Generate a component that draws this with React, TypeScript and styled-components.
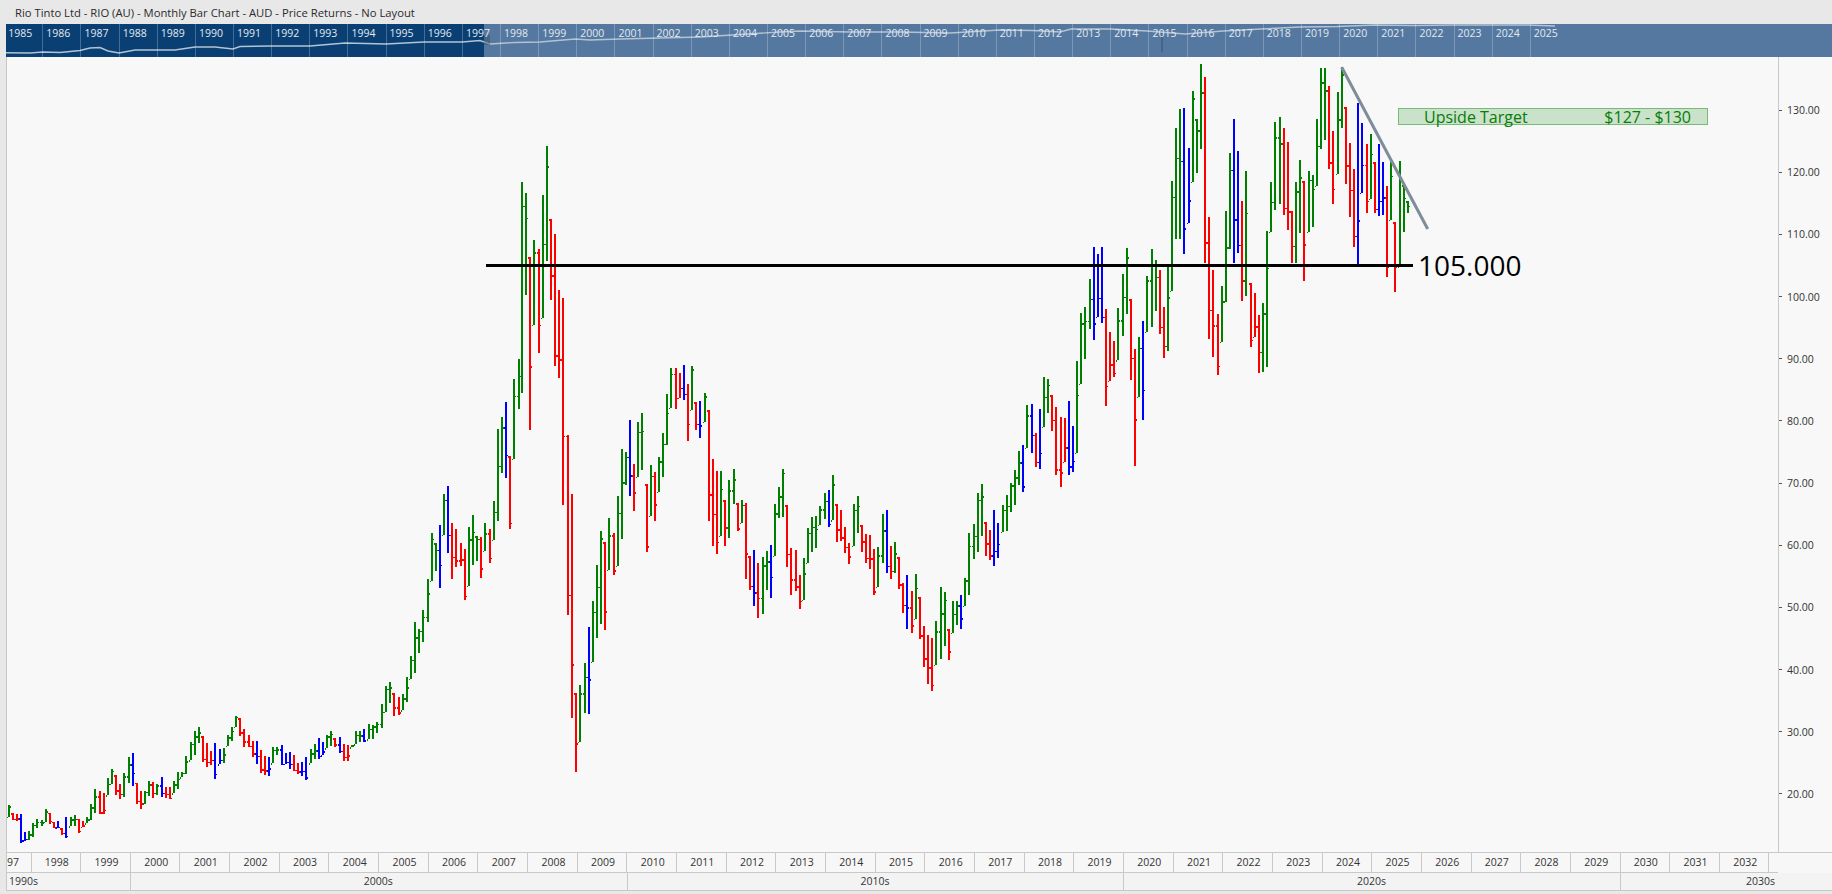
import styled, { createGlobalStyle } from "styled-components";

const GlobalStyle = createGlobalStyle`
  html, body {
    margin: 0;
    padding: 0;
    background: #e8e8e8;
  }
`;

// each run is read off the chart: top is the page y the values count from (3 units = 1px),
// x is the page x of the first bar, values are colour + high,low
const runs = [
  {
    top: 660,
    x: 8.5,
    bars: "g436,470 r460,480 r462,482 b463,550 b516,542 g512,540 g488,532 g478,505 g480,497 g448,485 r458,492 r485,503 b484,505 r505,526 b472,535 g472,498 g464,498 r476,518 r482,500 g470,490 g433,480 g388,458 r394,463 r400,463 g355,405 g328,372 r346,405 r372,418 g338,412 g292,370 b280,378 r368,433 r394,446 g392,432 g364,408 r367,415 g372,405 b352,412 r382,413 r382,418 g362,400 g335,388 g335,352 g287,342 g247,300 g214,285 g202,248 r229,305 r250,322 r272,316 b250,356 b267,312 g265,310 g226,257 g200,242 g167,200 r175,227 r208,262 r225,262 r243,292 b243,312 r271,338 r288,346 b292,347 g260,310 g260,285 b256,316 b278,312 b276,328 r286,334 r310,342 b307,347 b292,361 g268,310 g252,298 b235,298 b247,285 g225,264 g212,258 r234,262 b232,278 r252,303 r256,303 g254,262 g213,252 g212,247 b208,247 g193,238 g196,237 g185,218",
  },
  {
    top: 320,
    x: 382,
    bars: "g1152,1223 g1098,1175 g1087,1148 r1120,1187 r1132,1185 g1122,1170 g1072,1145 g1008,1076 g906,1058 g926,998 g870,965 g778,905 g640,782 g670,752 b615,803 g522,644 b498,698 r610,776 r628,740 r670,738 r688,839 g622,797 g586,734 g648,722 r652,773 g610,692 r628,728 g544,659 g328,602 g292,458 b246,473 r409,626 g178,416 g118,266",
  },
  {
    top: 120,
    x: 522,
    bars: "g186,818 g220,524 r411,929 g360,614 r387,698 g225,593 g78,423 r297,540 r343,738 r510,773 r534,1154",
  },
  {
    top: 350,
    x: 568,
    bars: "r255,795 r432,1103 r1030,1266 g1005,1175 g940,1088 b831,1091 g753,935 g645,863 g543,822 r576,839 g504,659 r549,674 g438,647 g297,568 g307,404 b210,437 r342,482 g216,380 g190,361 r403,605 g346,497 r366,512 g322,425 g250,380 g133,284 g54,173 r54,176 r69,143 b45,149 r102,272 g48,179 r156,239 b153,263 g129,215 r180,512 r327,587 r363,611 g363,557 r450,587 g390,563 g357,461 r460,542 g450,518 r460,686 r618,719 b600,767 r640,803 g621,791 g603,719 b585,743 g462,617 g411,503 g357,500 r465,650 r594,734 r600,722 r675,776 g624,749 g534,638 g501,607 g498,593 g468,524 g429,506 b420,530 g375,510 r462,575 r480,572 r531,608 r579,641 g462,587 g438,548 r525,605 r552,638 r555,656 r597,734 g591,710 g492,638 b480,668 r588,686",
  },
  {
    top: 250,
    x: 895,
    bars: "g876,968 r922,1016 r1000,1088 b975,1136 r1023,1148 g972,1106 r1041,1166 r1128,1250 r1155,1301 r1164,1322 g1113,1244 g1011,1226 g1026,1187 r1137,1229 g1053,1148 g1053,1124 b1035,1136 g984,1067 g849,1034 g822,926 g729,905 g702,857 r816,917 r840,929 b780,947 b819,923 g765,845 g735,842 g699,785 g660,764 g603,704 b585,725 g465,593 b462,608 r549,650 b477,656 g381,530 g387,488 r435,542 r471,674 r501,710 r504,635 b453,674 b528,665 g333,608 g189,401 g171,326 g87,236 b-9,269 b12,200 b-9,218 r178,467 r246,392 r274,380 g174,330 g72,257 g-6,191 r148,389 r297,647 g262,440 b213,509 g78,245 g-3,230 g30,182 r60,251 r171,323 g50,302",
  },
  {
    top: 50,
    x: 1172,
    bars: "g393,722 g234,566 g177,566 b174,611 b294,518 g123,395 g207,368 g42,297 r81,640 r501,866 r660,922 r792,974 g708,875 g483,755 g309,596 b207,638 b303,608 r453,752 g363,737 r700,890 r730,860 r795,968 g760,965 g543,950 g396,545 g216,480 g201,462 r234,494 r276,539 r483,640 g396,638 g330,548 r393,692 g363,545 g375,530 g208,407 g55,296 g55,270 r108,356 r243,461 g126,371 g52,233 r171,401 r279,500 r357,590 b159,642 b219,428 r282,488 g252,446 r336,488 b282,497 b336,494 r408,680 g336,509 r517,725 g334,652 g405,545 g453,488",
  },
];

const barColors: Record<string, string> = {
  g: "#008000",
  r: "#ff0000",
  b: "#0000ff",
};

const monthWidth = 49.66 / 12;

const bars = runs.flatMap((run) =>
  run.bars.split(" ").map((item, i) => {
    const [high, low] = item.slice(1).split(",").map(Number);
    return {
      color: barColors[item[0]],
      kind: item[0],
      x: Math.round(run.x + i * monthWidth - 1),
      high: run.top + high / 3,
      low: run.top + low / 3,
    };
  }),
);

let lastClose = bars[0].low;
const ohlc = bars.map((bar, i) => {
  const span = bar.low - bar.high;
  const wobble = (((i * 37) % 11) / 11) * 0.35;
  const close =
    bar.kind === "g" ? bar.high + span * (0.08 + wobble) : bar.low - span * (0.08 + wobble);
  const open = Math.min(Math.max(lastClose, bar.high), bar.low);
  lastClose = close;
  return { ...bar, open, close };
});

const stripYears = Array.from({ length: 41 }, (_, i) => 1985 + i);
const axisYears = Array.from({ length: 35 }, (_, i) => 1998 + i);
const prices = [130, 120, 110, 100, 90, 80, 70, 60, 50, 40, 30, 20];

const overviewLine =
  "0,28.7 24,29 37,28 54,28.5 74,26.5 84,24 94,23.5 102,27 113,29 129,26 151,26 169,26 189,23 209,23 227,25 234,22.5 265,22 304,22 339,19 380,20 418,18 456,18 474,16.5 484,20 509,18.5 534,18 569,15 584,16 614,15 694,13 734,10.5 774,8 794,7 844,8 894,8 944,9 994,6 1027,6.5 1054,8 1065,5 1104,5 1141,7 1179,10 1217,7 1255,5 1294,3 1331,2.5 1369,1 1408,1.5 1446,1 1484,1 1522,1 1549,2";

const Page = styled.div`
  width: 1832px;
  height: 894px;
  overflow: hidden;
  background: #e8e8e8;
  font-family: "Open Sans", "Noto Sans", sans-serif;
  color: #333333;
`;

const TitleBar = styled.div`
  height: 24px;
  padding-left: 15px;
  display: flex;
  align-items: center;
  font-size: 11.25px;
  color: #2b2b2b;
`;

const Strip = styled.div`
  position: relative;
  height: 33px;
  margin-left: 6px;
  display: flex;
  overflow: hidden;
  background: linear-gradient(to right, #0a3f73 478px, #54789f 478px);
`;

const StripYear = styled.div<{ $last?: boolean }>`
  position: relative;
  flex: 0 0 38.15px;
  box-sizing: border-box;
  padding: 2px 0 0 3px;
  font-size: 10.5px;
  line-height: 14px;
  color: #e3e9f0;
  border-right: ${(p) => (p.$last ? "none" : "1px solid rgba(255, 255, 255, 0.24)")};

  &:first-of-type {
    margin-left: -0.8px;
  }
`;

const OverviewDrawing = styled.svg`
  position: absolute;
  left: 0;
  top: 0;
`;

const Main = styled.div`
  margin-left: 6px;
  border-left: 1px solid #c8c8c8;
  display: flex;
  flex-direction: column;
`;

const ChartRow = styled.div`
  height: 795px;
  display: flex;
  background: #f8f8f8;
`;

const Plot = styled.div`
  position: relative;
  flex: 0 0 1771px;
  overflow: hidden;
`;

const PriceAxis = styled.div`
  flex: 1;
  box-sizing: border-box;
  padding-top: 22px;
  border-left: 1px solid #c8c8c8;
  display: flex;
  flex-direction: column;
`;

const PriceRow = styled.div`
  height: 62.18px;
  display: flex;
  align-items: center;
  gap: 5px;
  font-size: 10.5px;

  &::before {
    content: "";
    width: 3px;
    height: 1px;
    background: #555555;
  }
`;

const TargetBox = styled.div`
  position: absolute;
  left: 1391px;
  top: 51px;
  width: 310px;
  height: 17px;
  box-sizing: border-box;
  padding: 0 16px 0 25px;
  display: flex;
  align-items: center;
  justify-content: space-between;
  background: #c9e2c9;
  border: 1px solid #78bb78;
  font-size: 16px;
  color: #067d06;
`;

const LevelLabel = styled.div`
  position: absolute;
  left: 1411px;
  top: 189px;
  font-size: 28px;
  line-height: 38px;
  color: #000000;
`;

const YearRow = styled.div`
  height: 20px;
  display: flex;
  overflow: hidden;
  background: #f7f7f7;
  border-top: 1px solid #c8c8c8;
`;

const YearInner = styled.div`
  flex: 0 0 1771px;
  display: flex;
  box-sizing: border-box;
  border-bottom: 1px solid #c8c8c8;
`;

const YearCell = styled.div`
  flex: 0 0 49.66px;
  box-sizing: border-box;
  padding-left: 2px;
  border-right: 1px solid #c8c8c8;
  font-size: 10.5px;
  line-height: 19px;
  text-align: center;
`;

const PartYearCell = styled(YearCell)`
  flex-basis: 24.5px;
  padding-left: 0;
  text-align: left;
`;

const DecadeRow = styled.div`
  height: 17px;
  display: flex;
  background: #f3f3f3;
  border-bottom: 1px solid #c8c8c8;
`;

const DecadeCell = styled.div<{ $width: number; $align?: string }>`
  flex: 0 0 ${(p) => p.$width}px;
  box-sizing: border-box;
  padding: 0 3px 0 2px;
  border-right: 1px solid #c8c8c8;
  font-size: 10.5px;
  line-height: 17px;
  text-align: ${(p) => p.$align || "center"};

  &:last-child {
    border-right: none;
  }
`;

const Overview = () => (
  <OverviewDrawing width="1826" height="33">
    <polyline points={overviewLine} fill="none" stroke="#b3c3d4" strokeWidth="1.4" />
    <g stroke="#33495f" strokeWidth="0.8">
      <line x1="479" y1="11" x2="479" y2="21" />
      <line x1="481" y1="11" x2="481" y2="21" />
      <line x1="483" y1="11" x2="483" y2="21" />
      <line x1="1156" y1="11" x2="1156" y2="28" />
    </g>
  </OverviewDrawing>
);

const BarChart = () => (
  <svg width="1771" height="795" viewBox="7 57 1771 795" shapeRendering="crispEdges" style={{ display: "block" }}>
    {ohlc.map((bar, i) => (
      <g key={i} fill={bar.color}>
        <rect x={bar.x} y={bar.high} width="2" height={bar.low - bar.high} />
        <rect x={bar.x - 1} y={bar.open} width="1" height="1.5" />
        <rect x={bar.x + 2} y={bar.close} width="1" height="1.5" />
      </g>
    ))}
    <rect x="486" y="264" width="927" height="3" fill="#000000" />
    <line
      x1="1341.7"
      y1="67.3"
      x2="1427.7"
      y2="229"
      stroke="#7f8c9a"
      strokeWidth="3"
      shapeRendering="auto"
    />
  </svg>
);

export default function App() {
  return (
    <Page>
      <GlobalStyle />
      <TitleBar>Rio Tinto Ltd - RIO (AU) - Monthly Bar Chart - AUD - Price Returns - No Layout</TitleBar>
      <Strip>
        <Overview />
        {stripYears.map((year) => (
          <StripYear key={year} $last={year === 2025}>
            {year}
          </StripYear>
        ))}
      </Strip>
      <Main>
        <ChartRow>
          <Plot>
            <BarChart />
            <TargetBox>
              <span>Upside Target</span>
              <span>$127 - $130</span>
            </TargetBox>
            <LevelLabel>105.000</LevelLabel>
          </Plot>
          <PriceAxis>
            {prices.map((price) => (
              <PriceRow key={price}>{price.toFixed(2)}</PriceRow>
            ))}
          </PriceAxis>
        </ChartRow>
        <YearRow>
          <YearInner>
            <PartYearCell>97</PartYearCell>
            {axisYears.map((year) => (
              <YearCell key={year}>{year}</YearCell>
            ))}
          </YearInner>
        </YearRow>
        <DecadeRow>
          <DecadeCell $width={124} $align="left">
            1990s
          </DecadeCell>
          <DecadeCell $width={496.6}>2000s</DecadeCell>
          <DecadeCell $width={496.6}>2010s</DecadeCell>
          <DecadeCell $width={496.6}>2020s</DecadeCell>
          <DecadeCell $width={157.2} $align="right">
            2030s
          </DecadeCell>
        </DecadeRow>
      </Main>
    </Page>
  );
}
